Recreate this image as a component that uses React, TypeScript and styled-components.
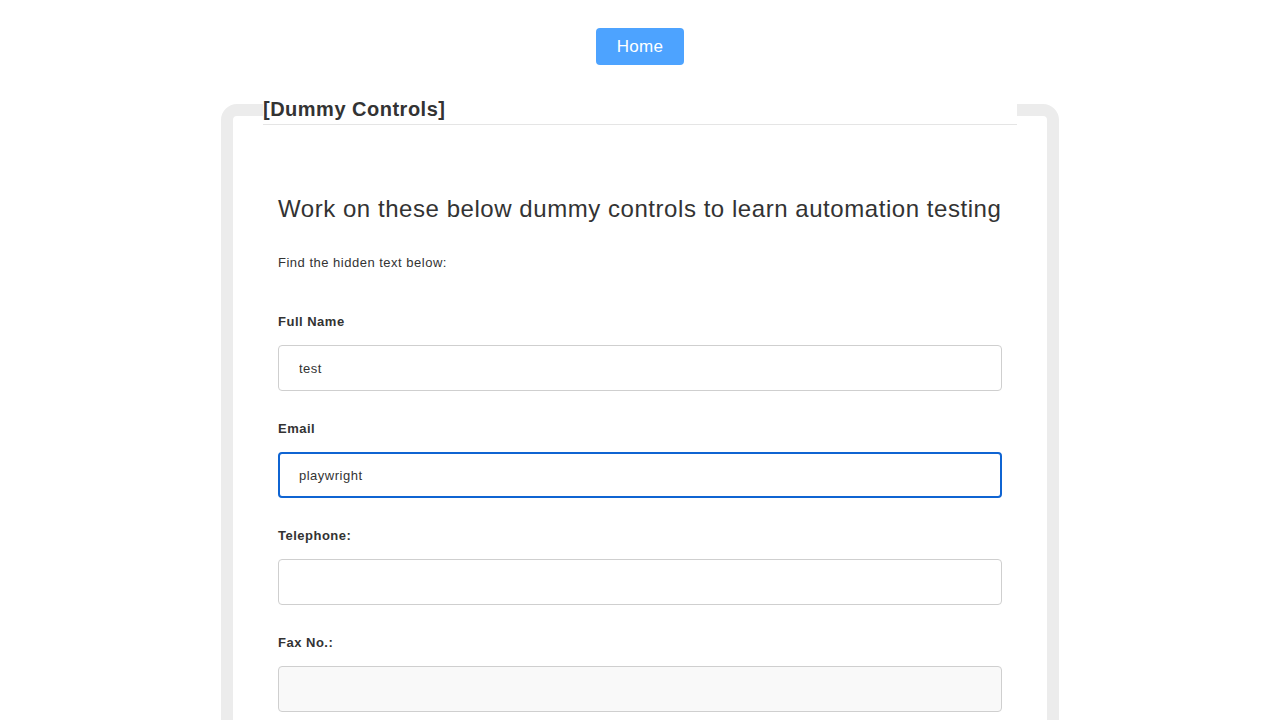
import React from "react";
import styled, { createGlobalStyle } from "styled-components";

const Global = createGlobalStyle`
  html, body { margin: 0; padding: 0; background: #fff; }
  body { font-family: "Liberation Sans", Arial, Helvetica, sans-serif; color: #333; }
  * { box-sizing: border-box; }
`;

const Page = styled.div`
  display: flex;
  flex-direction: column;
  align-items: center;
  padding-top: 28px;
`;

const HomeButton = styled.button`
  width: 88px;
  height: 37px;
  border: none;
  border-radius: 4px;
  background: #4da3ff;
  color: #fff;
  font-family: "Liberation Sans", Arial, sans-serif;
  font-size: 17px;
  letter-spacing: 0.3px;
  cursor: pointer;
`;

const Fieldset = styled.fieldset`
  width: 838px;
  margin: 29px 0 0;
  padding: 0 30px 40px 30px;
  border: 12px solid #ececec;
  border-radius: 16px;
  min-width: 0;
`;

const Legend = styled.legend`
  display: block;
  width: 100%;
  padding: 0;
  font-size: 20px;
  font-weight: bold;
  letter-spacing: 0.5px;
  line-height: 30px;
  color: #333;
  border-bottom: 1px solid #e5e5e5;
  background: #fff;
`;

const Content = styled.div`
  padding: 70px 15px 0 15px;
  display: flex;
  flex-direction: column;
`;

const Heading = styled.h3`
  margin: 0;
  font-size: 24px;
  font-weight: normal;
  letter-spacing: 0.55px;
  line-height: 28px;
  color: #333;
  white-space: nowrap;
`;

const Hint = styled.p`
  margin: 30px 0 40px;
  font-size: 13px;
  letter-spacing: 0.5px;
  line-height: 19px;
`;

const Group = styled.div`
  display: flex;
  flex-direction: column;
  margin-bottom: 28px;
`;

const Label = styled.label`
  font-size: 13px;
  font-weight: bold;
  letter-spacing: 0.5px;
  line-height: 19px;
  margin-bottom: 14px;
  color: #333;
`;

const Input = styled.input<{ $focused?: boolean }>`
  width: 100%;
  height: 46px;
  font-family: "Liberation Sans", Arial, sans-serif;
  font-size: 13px;
  letter-spacing: 0.5px;
  color: #333;
  border-radius: 4px;
  border: ${(p) => (p.$focused ? "2px solid #0f64d2" : "1px solid #cfcfcf")};
  padding: 0 20px 0 ${(p) => (p.$focused ? "19px" : "20px")};
  background: #fff;
  outline: none;
  &:read-only { background: #f9f9f9; }
`;

export default function App() {
  return (
    <>
      <Global />
      <Page>
        <HomeButton>Home</HomeButton>
        <Fieldset>
          <Legend>[Dummy Controls]</Legend>
          <Content>
            <Heading>Work on these below dummy controls to learn automation testing</Heading>
            <Hint>Find the hidden text below:</Hint>
            <Group>
              <Label>Full Name</Label>
              <Input defaultValue="test" />
            </Group>
            <Group>
              <Label>Email</Label>
              <Input $focused defaultValue="playwright" />
            </Group>
            <Group>
              <Label>Telephone:</Label>
              <Input defaultValue="" />
            </Group>
            <Group>
              <Label>Fax No.:</Label>
              <Input readOnly defaultValue="" />
            </Group>
          </Content>
        </Fieldset>
      </Page>
    </>
  );
}
